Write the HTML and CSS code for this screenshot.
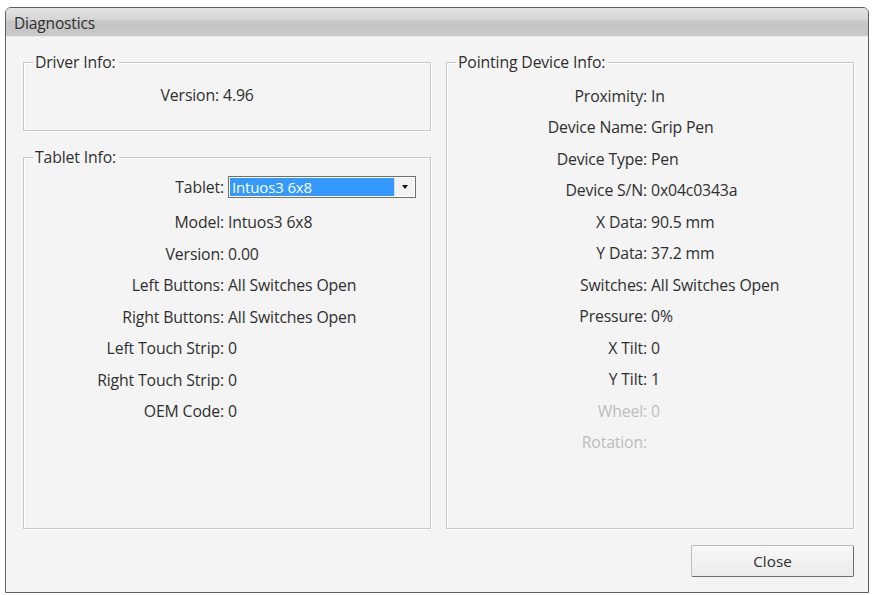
FILE: index.html
```html
<!DOCTYPE html>
<html lang="en">

<head>
    <meta charset="UTF-8" />
    <title>Diagnostics</title>
    <link rel="stylesheet" href="styles.css">
</head>

<body>
    <div class="window">
        <div class="titlebar">Diagnostics</div>
        <div class="client">
            <div class="columns">
                <div class="col-left">
                    <!-- Driver -->
                    <fieldset class="group group-driver">
                        <legend>Driver Info:</legend>
                        <div class="rows rows-driver">
                            <span class="label">Version:</span><span class="value">4.96</span>
                        </div>
                    </fieldset>

                    <!-- Tablet -->
                    <fieldset class="group group-tablet">
                        <legend>Tablet Info:</legend>
                        <div class="rows">
                            <span class="label label-combo">Tablet:</span>
                            <span class="value value-combo">
                                <span class="combo">
                                    <span class="combo-text">Intuos3 6x8</span>
                                    <span class="combo-btn"><span class="arrow"></span></span>
                                </span>
                            </span>
                            <span class="label">Model:</span><span class="value">Intuos3 6x8</span>
                            <span class="label">Version:</span><span class="value">0.00</span>
                            <span class="label">Left Buttons:</span><span class="value">All Switches Open</span>
                            <span class="label">Right Buttons:</span><span class="value">All Switches Open</span>
                            <span class="label">Left Touch Strip:</span><span class="value">0</span>
                            <span class="label">Right Touch Strip:</span><span class="value">0</span>
                            <span class="label">OEM Code:</span><span class="value">0</span>
                        </div>
                    </fieldset>
                </div>

                <!-- Pointing device -->
                <fieldset class="group group-pointing">
                    <legend>Pointing Device Info:</legend>
                    <div class="rows">
                        <span class="label">Proximity:</span><span class="value">In</span>
                        <span class="label">Device Name:</span><span class="value">Grip Pen</span>
                        <span class="label">Device Type:</span><span class="value">Pen</span>
                        <span class="label">Device S/N:</span><span class="value">0x04c0343a</span>
                        <span class="label">X Data:</span><span class="value">90.5 mm</span>
                        <span class="label">Y Data:</span><span class="value">37.2 mm</span>
                        <span class="label">Switches:</span><span class="value">All Switches Open</span>
                        <span class="label">Pressure:</span><span class="value">0%</span>
                        <span class="label">X Tilt:</span><span class="value">0</span>
                        <span class="label">Y Tilt:</span><span class="value">1</span>
                        <span class="label disabled">Wheel:</span><span class="value disabled">0</span>
                        <span class="label disabled">Rotation:</span><span class="value disabled"></span>
                    </div>
                </fieldset>
            </div>

            <div class="footer">
                <button type="button" class="btn">Close</button>
            </div>
        </div>
    </div>
</body>

</html>
```

FILE: styles.css
```css
/* reset */
* {
    margin: 0;
    padding: 0;
    box-sizing: border-box;
}

body {
    font-family: "Open Sans", "Noto Sans", sans-serif;
    font-size: 15.8px;
    letter-spacing: -0.15px;
    color: #2f2f2f;
    background: #fff;
}

/* window frame */
.window {
    width: 864px;
    height: 586px;
    margin: 7px 0 0 5px;
    border: 1px solid #5e5e5e;
    border-radius: 6px 6px 0 0;
    background: #f4f4f4;
    display: flex;
    flex-direction: column;
    overflow: hidden;
}

.titlebar {
    height: 29px;
    padding: 4px 0 0 8px;
    font-size: 15.5px;
    color: #2f2f2f;
    background: linear-gradient(#e2e2e2 0%, #d6d6d6 40%, #c4c4c4 50%, #c9c9c9 100%);
    border-bottom: 1px solid #e9e9e9;
}

.client {
    flex: 1;
    display: flex;
    flex-direction: column;
    padding: 17px 14px 0 16px;
    border-left: 1px solid #fff;
}

.columns {
    display: grid;
    grid-template-columns: 408px 408px;
    column-gap: 15px;
    height: 475px;
}

.col-left {
    display: flex;
    flex-direction: column;
}

/* group boxes */
.group {
    border: 1px solid #c8c8c8;
    box-shadow: inset 1px 1px 0 #fff, 1px 1px 0 #fff;
    padding: 0;
    min-width: 0;
}

.group legend {
    margin-left: 9px;
    padding: 0 3px 0 2px;
    line-height: 16px;
}

.group-driver {
    height: 77px;
}

.group-tablet {
    flex: 1;
    margin-top: 18px;
}

/* label / value rows */
.rows {
    display: grid;
    grid-template-columns: 200px 1fr;
    grid-auto-rows: 31.5px;
    align-items: center;
    padding-top: 10px;
}

.rows-driver {
    grid-template-columns: 195px 1fr;
    padding-top: 9.5px;
}

.label {
    text-align: right;
    white-space: nowrap;
}

.value {
    padding-left: 4px;
    white-space: nowrap;
}

.disabled {
    color: #bdbdbd;
}

.label-combo,
.value-combo {
    align-self: start;
    margin-top: 1px;
}

.label-combo {
    margin-top: 0.5px;
}

/* combo box */
.combo {
    display: flex;
    width: 188px;
    height: 22px;
    border: 1px solid #707070;
    background: #fff;
    padding: 1px;
}

.combo-text {
    flex: 1;
    background: #3399ff;
    color: #fff;
    font-size: 15px;
    line-height: 18px;
    padding-left: 2px;
}

.combo-btn {
    width: 20px;
    display: flex;
    align-items: center;
    justify-content: center;
    border-left: 1px solid #dcdcdc;
    background: #f2f2f2;
}

.arrow {
    width: 0;
    height: 0;
    border-left: 3.5px solid transparent;
    border-right: 3.5px solid transparent;
    border-top: 4px solid #111;
}

/* footer */
.footer {
    display: flex;
    justify-content: flex-end;
    padding-top: 16px;
}

.btn {
    width: 163px;
    height: 32px;
    font-family: inherit;
    font-size: 15.3px;
    color: #2f2f2f;
    background: linear-gradient(#f7f7f7, #ececec);
    border: 1px solid #bdbdbd;
    border-right-color: #6e6e6e;
    border-bottom-color: #6e6e6e;
    border-radius: 2px;
}
```
